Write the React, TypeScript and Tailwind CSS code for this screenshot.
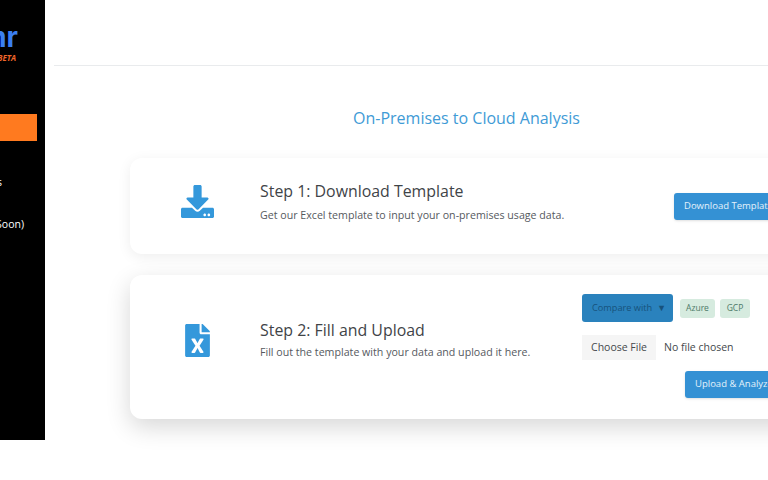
import React from "react";
import { FaDownload, FaFileExcel } from "react-icons/fa";

export default function App() {
  return (
    <div className="w-[768px] h-[480px] overflow-hidden bg-white flex items-start font-['Open_Sans',sans-serif]">
      <aside className="w-[45px] h-[440px] shrink-0 bg-black overflow-hidden flex flex-col text-white">
        <div className="h-[52px] shrink-0 flex justify-end items-end pr-[27px]">
          <span className="text-[28px] leading-[30px] font-bold text-[#3b7ff0] whitespace-nowrap font-['Inter',sans-serif]">Finomr</span>
        </div>
        <div className="h-[12px] shrink-0 flex justify-end items-center pr-[29px]">
          <span className="text-[8px] leading-[12px] font-bold italic text-[#f0662a] whitespace-nowrap">BETA</span>
        </div>
        <div className="mt-[50px] h-[27px] shrink-0 mr-[8px] bg-[#ff7a1f]" />
        <div className="mt-[32px] h-[18px] shrink-0 flex justify-end items-center pr-[43px]">
          <span className="text-[11px] leading-[18px] whitespace-nowrap">FinOps</span>
        </div>
        <div className="mt-[24px] h-[18px] shrink-0 flex justify-end items-center pr-[21px]">
          <span className="text-[10.5px] leading-[18px] whitespace-nowrap">Cost (Coming Soon)</span>
        </div>
      </aside>
      <main className="w-[824px] shrink-0 ml-[9px] flex flex-col">
        <header className="h-[66px] border-b border-[#e9ebed]" />
        <h1 className="mt-[40px] pl-[1px] text-center text-[16px] leading-[24px] font-normal text-[#3f9bd6]">
          On-Premises to Cloud Analysis
        </h1>
        <section className="mt-[28px] mx-[76px] h-[96px] rounded-xl bg-white shadow-[0_3px_14px_rgba(0,0,0,0.07)] flex items-center pl-[51px] pr-[10px]">
          <FaDownload className="mb-[10px] w-[33px] h-[33px] text-[#3498db] shrink-0" />
          <div className="ml-[46px] mb-[10px] flex flex-col gap-[5px]">
            <h2 className="text-[15.9px] leading-[22px] font-normal text-[#3f4448]">Step 1: Download Template</h2>
            <p className="text-[10.65px] leading-[16px] text-[#55595e]">Get our Excel template to input your on-premises usage data.</p>
          </div>
          <button className="ml-auto w-[118px] h-[27px] pl-[10px] text-left rounded-[3px] bg-[#3491d4] text-[#e4f2fb] text-[9.5px] font-normal whitespace-nowrap shadow-sm">
            Download Template
          </button>
        </section>
        <section className="mt-[21px] mx-[76px] h-[144px] rounded-xl bg-white shadow-[0_8px_24px_rgba(0,0,0,0.16)] flex items-center pl-[55px] pr-[10px]">
          <FaFileExcel className="mb-[14px] w-[25px] h-[33px] text-[#3498db] shrink-0" />
          <div className="ml-[50px] mb-[15px] flex flex-col gap-[3px]">
            <h2 className="text-[15.9px] leading-[22px] font-normal text-[#3f4448]">Step 2: Fill and Upload</h2>
            <p className="text-[10.65px] leading-[16px] text-[#55595e]">Fill out the template with your data and upload it here.</p>
          </div>
          <div className="ml-auto -mt-[2px] w-[210px] flex flex-col items-start">
            <div className="flex items-center gap-[7px]">
              <button className="w-[91px] h-[28px] pl-[10px] text-left rounded-[3px] bg-[#2a82bd] text-[#17527c] text-[9.2px] whitespace-nowrap">
                Compare with&nbsp;&nbsp;▼
              </button>
              <span className="w-[35px] h-[19px] rounded-[3px] bg-[#d6ebdf] text-[#4d7a68] text-[8.5px] flex items-center justify-center">Azure</span>
              <span className="ml-[-2px] w-[30px] h-[19px] rounded-[3px] bg-[#d6ebdf] text-[#4d7a68] text-[8.5px] flex items-center justify-center">GCP</span>
            </div>
            <div className="mt-[13px] flex items-center">
              <span className="w-[74px] h-[25px] bg-[#f5f5f5] text-[#44484c] text-[10.5px] flex items-center justify-center whitespace-nowrap">Choose File</span>
              <span className="ml-[8px] text-[#44484c] text-[10.5px] whitespace-nowrap">No file chosen</span>
            </div>
            <button className="mt-[11px] ml-[103px] w-[107px] h-[27px] pl-[10px] text-left rounded-[3px] bg-[#3491d4] text-[#e4f2fb] text-[9.5px] font-normal whitespace-nowrap shadow-sm">
              Upload &amp; Analyze
            </button>
          </div>
        </section>
      </main>
    </div>
  );
}
